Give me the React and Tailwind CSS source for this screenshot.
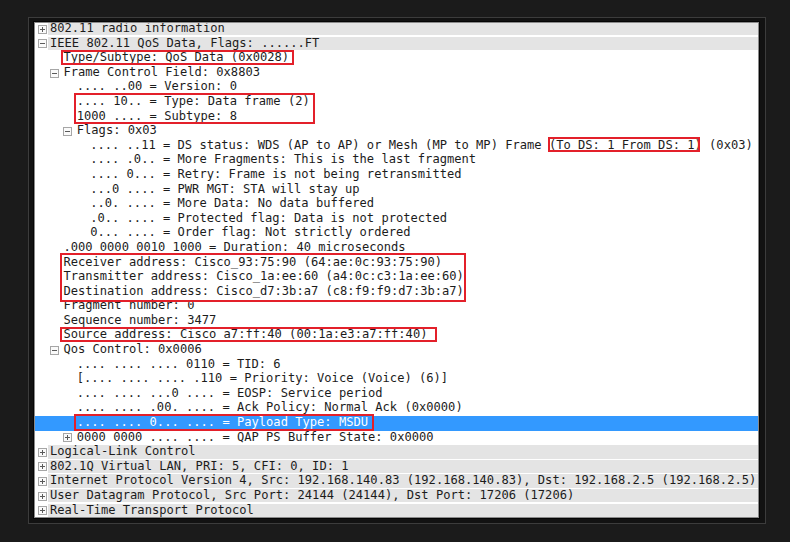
import React from "react";

const rows = [
  { l: 0, e: "+", t: "802.11 radio information" },
  { l: 0, e: "-", t: "IEEE 802.11 QoS Data, Flags: ......FT" },
  { l: 1, t: "Type/Subtype: QoS Data (0x0028)" },
  { l: 1, e: "-", t: "Frame Control Field: 0x8803" },
  { l: 2, t: ".... ..00 = Version: 0" },
  { l: 2, t: ".... 10.. = Type: Data frame (2)" },
  { l: 2, t: "1000 .... = Subtype: 8" },
  { l: 2, e: "-", t: "Flags: 0x03" },
  { l: 3, t: ".... ..11 = DS status: WDS (AP to AP) or Mesh (MP to MP) Frame (To DS: 1 From DS: 1) (0x03)" },
  { l: 3, t: ".... .0.. = More Fragments: This is the last fragment" },
  { l: 3, t: ".... 0... = Retry: Frame is not being retransmitted" },
  { l: 3, t: "...0 .... = PWR MGT: STA will stay up" },
  { l: 3, t: "..0. .... = More Data: No data buffered" },
  { l: 3, t: ".0.. .... = Protected flag: Data is not protected" },
  { l: 3, t: "0... .... = Order flag: Not strictly ordered" },
  { l: 1, t: ".000 0000 0010 1000 = Duration: 40 microseconds" },
  { l: 1, t: "Receiver address: Cisco_93:75:90 (64:ae:0c:93:75:90)" },
  { l: 1, t: "Transmitter address: Cisco_1a:ee:60 (a4:0c:c3:1a:ee:60)" },
  { l: 1, t: "Destination address: Cisco_d7:3b:a7 (c8:f9:f9:d7:3b:a7)" },
  { l: 1, t: "Fragment number: 0" },
  { l: 1, t: "Sequence number: 3477" },
  { l: 1, t: "Source address: Cisco_a7:ff:40 (00:1a:e3:a7:ff:40)" },
  { l: 1, e: "-", t: "Qos Control: 0x0006" },
  { l: 2, t: ".... .... .... 0110 = TID: 6" },
  { l: 2, t: "[.... .... .... .110 = Priority: Voice (Voice) (6)]" },
  { l: 2, t: ".... .... ...0 .... = EOSP: Service period" },
  { l: 2, t: ".... .... .00. .... = Ack Policy: Normal Ack (0x0000)" },
  { l: 2, t: ".... .... 0... .... = Payload Type: MSDU", sel: true },
  { l: 2, e: "+", t: "0000 0000 .... .... = QAP PS Buffer State: 0x0000" },
  { l: 0, e: "+", t: "Logical-Link Control" },
  { l: 0, e: "+", t: "802.1Q Virtual LAN, PRI: 5, CFI: 0, ID: 1" },
  { l: 0, e: "+", t: "Internet Protocol Version 4, Src: 192.168.140.83 (192.168.140.83), Dst: 192.168.2.5 (192.168.2.5)" },
  { l: 0, e: "+", t: "User Datagram Protocol, Src Port: 24144 (24144), Dst Port: 17206 (17206)" },
  { l: 0, e: "+", t: "Real-Time Transport Protocol" },
];

const indent = {
  1: "pl-[15px]",
  2: "pl-[28.4px]",
  3: "pl-[41.8px]",
};

function Expander({ kind }) {
  return (
    <svg width="9" height="9" viewBox="0 0 9 9" className="block">
      <rect x="0.5" y="0.5" width="8" height="8" fill="#fafafa" stroke="#a6a6a6" />
      <line x1="2" y1="4.5" x2="7" y2="4.5" stroke="#5a5a5a" />
      {kind === "+" && <line x1="4.5" y1="2" x2="4.5" y2="7" stroke="#5a5a5a" />}
    </svg>
  );
}

function Row({ r }) {
  if (r.l === 0) {
    return (
      <div className="flex h-[14.6px]">
        <div className="w-[13px] shrink-0 pl-[2.5px] flex items-start pt-[2.5px]">
          <Expander kind={r.e} />
        </div>
        <div className="flex-1 h-[13.3px] bg-[#e4e4e4] pl-[2px] leading-[13px] whitespace-pre text-[#1c1c1c] overflow-hidden">
          {r.t}
        </div>
      </div>
    );
  }
  return (
    <div
      className={`flex h-[14.6px] ${indent[r.l]} ${r.sel ? "bg-[#3399ff] text-white" : "text-[#1c1c1c]"}`}
    >
      <div className="w-[13.4px] shrink-0 pt-[2.8px]">
        {r.e && <Expander kind={r.e} />}
      </div>
      <div className="leading-[13px] whitespace-pre">{r.t}</div>
    </div>
  );
}

export default function App() {
  return (
    <div className="w-[790px] h-[542px] bg-[#1b1b1b] pt-[17px] pl-[28px]">
      <div className="w-[738px] h-[507px] border border-[#3c3c3c] bg-[#121212] pt-[3px] pl-[4px] pr-[5px] pb-[4px]">
        <div className="h-full border border-[#050505]">
          <div className="h-full border border-[#8a8a8a] bg-white relative overflow-hidden">
            <div
              className="-mt-[1px] text-[12.1px]"
              style={{ fontFamily: '"DejaVu Sans Mono", monospace' }}
            >
              {rows.map((r, i) => (
                <Row key={i} r={r} />
              ))}
            </div>
            <div className="absolute left-[26px] top-[27px] w-[233px] h-[15px] border-2 border-[#e3202a]" />
            <div className="absolute left-[39px] top-[70px] w-[241px] h-[31px] border-2 border-[#e3202a]" />
            <div className="absolute left-[513px] top-[114px] w-[152px] h-[15px] border-2 border-[#e3202a]" />
            <div className="absolute left-[25px] top-[230px] w-[406px] h-[49px] border-2 border-[#e3202a]" />
            <div className="absolute left-[25px] top-[304px] w-[377px] h-[15px] border-2 border-[#e3202a]" />
            <div className="absolute left-[39px] top-[391px] w-[300px] h-[17px] border-2 border-[#e3202a]" />
          </div>
        </div>
      </div>
    </div>
  );
}
